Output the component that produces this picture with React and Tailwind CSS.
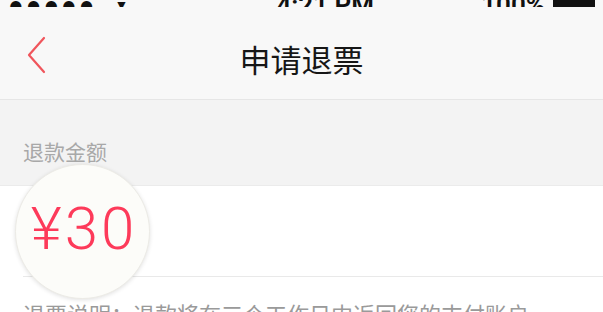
import React from 'react';

const Chevron = () => (
  <svg width="22" height="40" viewBox="0 0 22 40" className="block">
    <polyline points="19,2 4,19 19,36" fill="none" stroke="#f0555c" strokeWidth="2.2" strokeLinecap="round" strokeLinejoin="round" />
  </svg>
);

const StatusBar = () => (
  <div className="h-[7px] overflow-hidden relative">
    <div className="absolute left-0 right-0 bottom-[-15px] h-[34px] flex items-center px-[8px] text-[26px] font-semibold text-[#111]" style={{ fontFamily: 'Roboto, sans-serif' }}>
      <span className="tracking-[2px]">●●●●●</span>
      <span className="ml-[18px] text-[14px]">▼</span>
      <span className="ml-[148px]">4:21 PM</span>
      <span className="ml-auto">100%</span>
      <span className="ml-[8px] w-[42px] h-[20px] bg-[#111] rounded-[2px]" />
    </div>
  </div>
);

export default function App() {
  return (
    <div className="w-[603px] h-[312px] overflow-hidden bg-white relative" style={{ fontFamily: '"Noto Sans CJK SC", "Noto Sans", sans-serif' }}>
      <div className="bg-[#f8f8f8] border-b border-[#e6e6e6]">
        <StatusBar />
        <div className="h-[92px] flex items-center relative pl-[25px] pt-[6px]">
          <Chevron />
          <div className="absolute inset-0 flex items-center justify-center text-[31px] font-normal text-[#161616] pt-[12px]">
            申请退票
          </div>
        </div>
      </div>

      <div className="bg-[#f3f3f3] h-[86px] flex items-end px-[23px] pb-[18px] border-b border-[#ebebeb]">
        <span className="text-[21px] text-[#a8a8a8]">退款金额</span>
      </div>

      <div className="h-[91px] border-b border-[#e9e9e9] ml-[23px]" />

      <div className="px-[23px] pt-[20px] text-[22px] text-[#9a9a9a] whitespace-nowrap">
        退票说明：退款将在三个工作日内返回您的支付账户
      </div>

      <div className="absolute left-[15px] top-[164px] w-[135px] h-[135px] rounded-full bg-[#fcfcf9] shadow-[0_1px_4px_rgba(0,0,0,0.12)] border border-[#ecebe6] flex items-center justify-center">
        <span className="text-[60px] font-light text-[#fd3a5a] leading-none -mt-[6px] tracking-[3px] pl-[3px]" style={{ fontFamily: 'Roboto, sans-serif' }}>
          ¥30
        </span>
      </div>
    </div>
  );
}
